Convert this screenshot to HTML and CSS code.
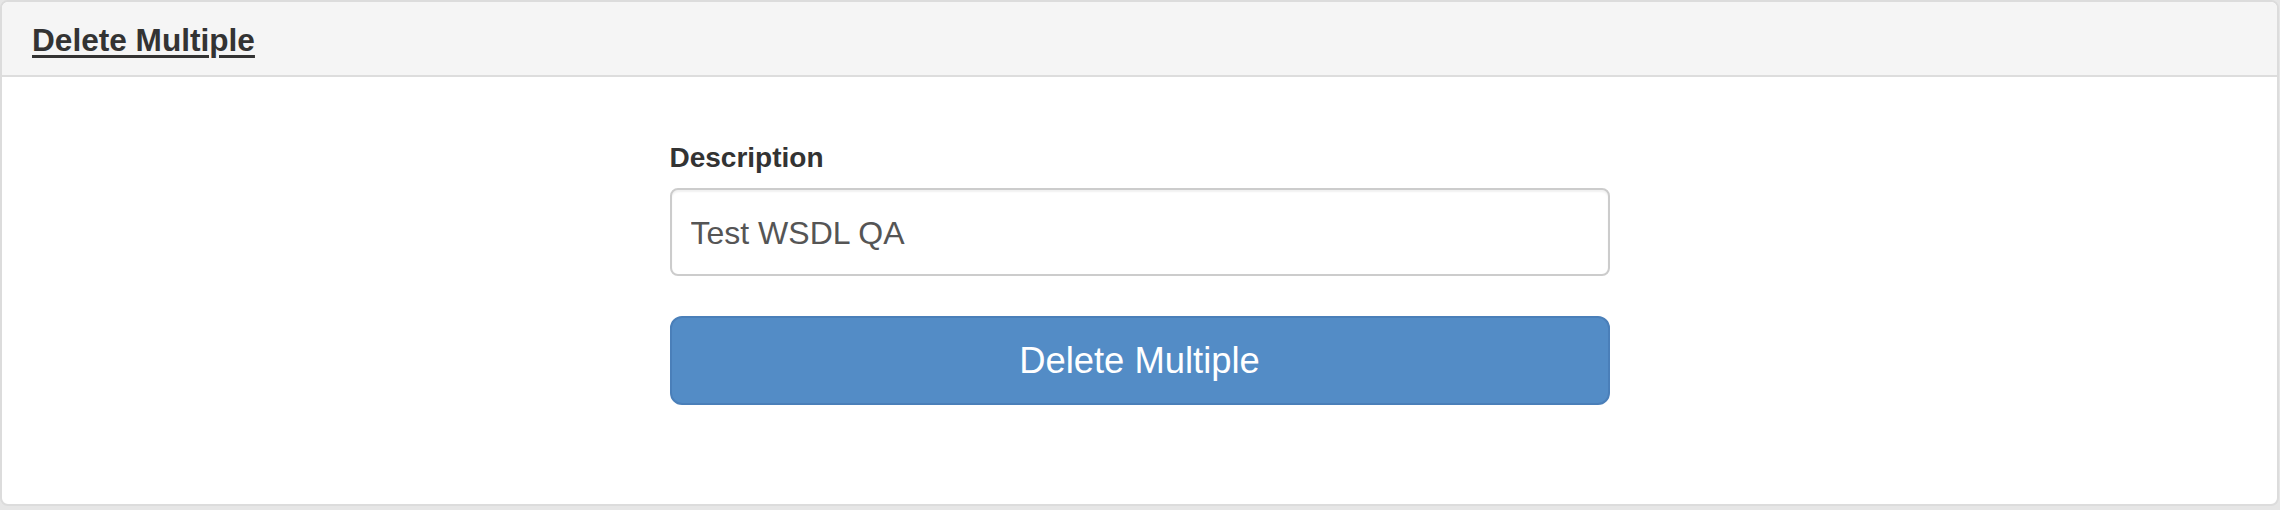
FILE: index.html
```html
<!DOCTYPE html>
<html>
<head>
<meta charset="utf-8">
<link rel="stylesheet" href="styles.css">
</head>
<body>
<div class="panel">
  <div class="panel-heading">
    <a class="panel-title" href="#">Delete Multiple</a>
  </div>
  <div class="panel-body">
    <form class="form">
      <label class="label" for="desc">Description</label>
      <input class="input" id="desc" type="text" value="Test WSDL QA">
      <button class="btn" type="button">Delete Multiple</button>
    </form>
  </div>
</div>
</body>
</html>
```
FILE: styles.css
```css
html, body {
  margin: 0;
  padding: 0;
}
body {
  background: #e6e6e6;
  font-family: "Liberation Sans", Arial, Helvetica, sans-serif;
  color: #333;
  width: 2280px;
  height: 510px;
  overflow: hidden;
}
.panel {
  box-sizing: border-box;
  width: 2279px;
  height: 506px;
  background: #fff;
  border: 2px solid #dcdcdc;
  border-radius: 8px;
  overflow: hidden;
  display: flex;
  flex-direction: column;
}
.panel-heading {
  background: #f5f5f5;
  border-bottom: 2px solid #dddddd;
  padding: 22px 30px 18px;
  height: 33px;
}
.panel-title {
  display: block;
  font-size: 31.6px;
  font-weight: 700;
  line-height: 33px;
  color: #333;
  text-decoration: underline;
  text-decoration-thickness: 3px;
  text-underline-offset: 4px;
}
.panel-body {
  flex: 1;
  padding: 61px 30px 0;
  display: flex;
  justify-content: center;
}
.form {
  width: 940px;
  display: flex;
  flex-direction: column;
}
.label {
  font-size: 28px;
  font-weight: 700;
  line-height: 40px;
  margin-bottom: 10px;
  color: #333;
}
.input {
  box-sizing: border-box;
  height: 88px;
  width: 100%;
  border: 2px solid #cccccc;
  border-radius: 8px;
  padding: 2px 19px 0;
  font-family: "Liberation Sans", Arial, Helvetica, sans-serif;
  font-size: 32px;
  color: #555;
  box-shadow: inset 0 2px 2px rgba(0,0,0,0.06);
  outline: none;
  margin: 0 0 40px;
}
.btn {
  box-sizing: border-box;
  height: 89px;
  width: 100%;
  background: #538cc6;
  border: 2px solid #4a7fb9;
  border-radius: 12px;
  color: #fff;
  font-family: "Liberation Sans", Arial, Helvetica, sans-serif;
  font-size: 36.4px;
  padding: 0;
  cursor: pointer;
}
```
